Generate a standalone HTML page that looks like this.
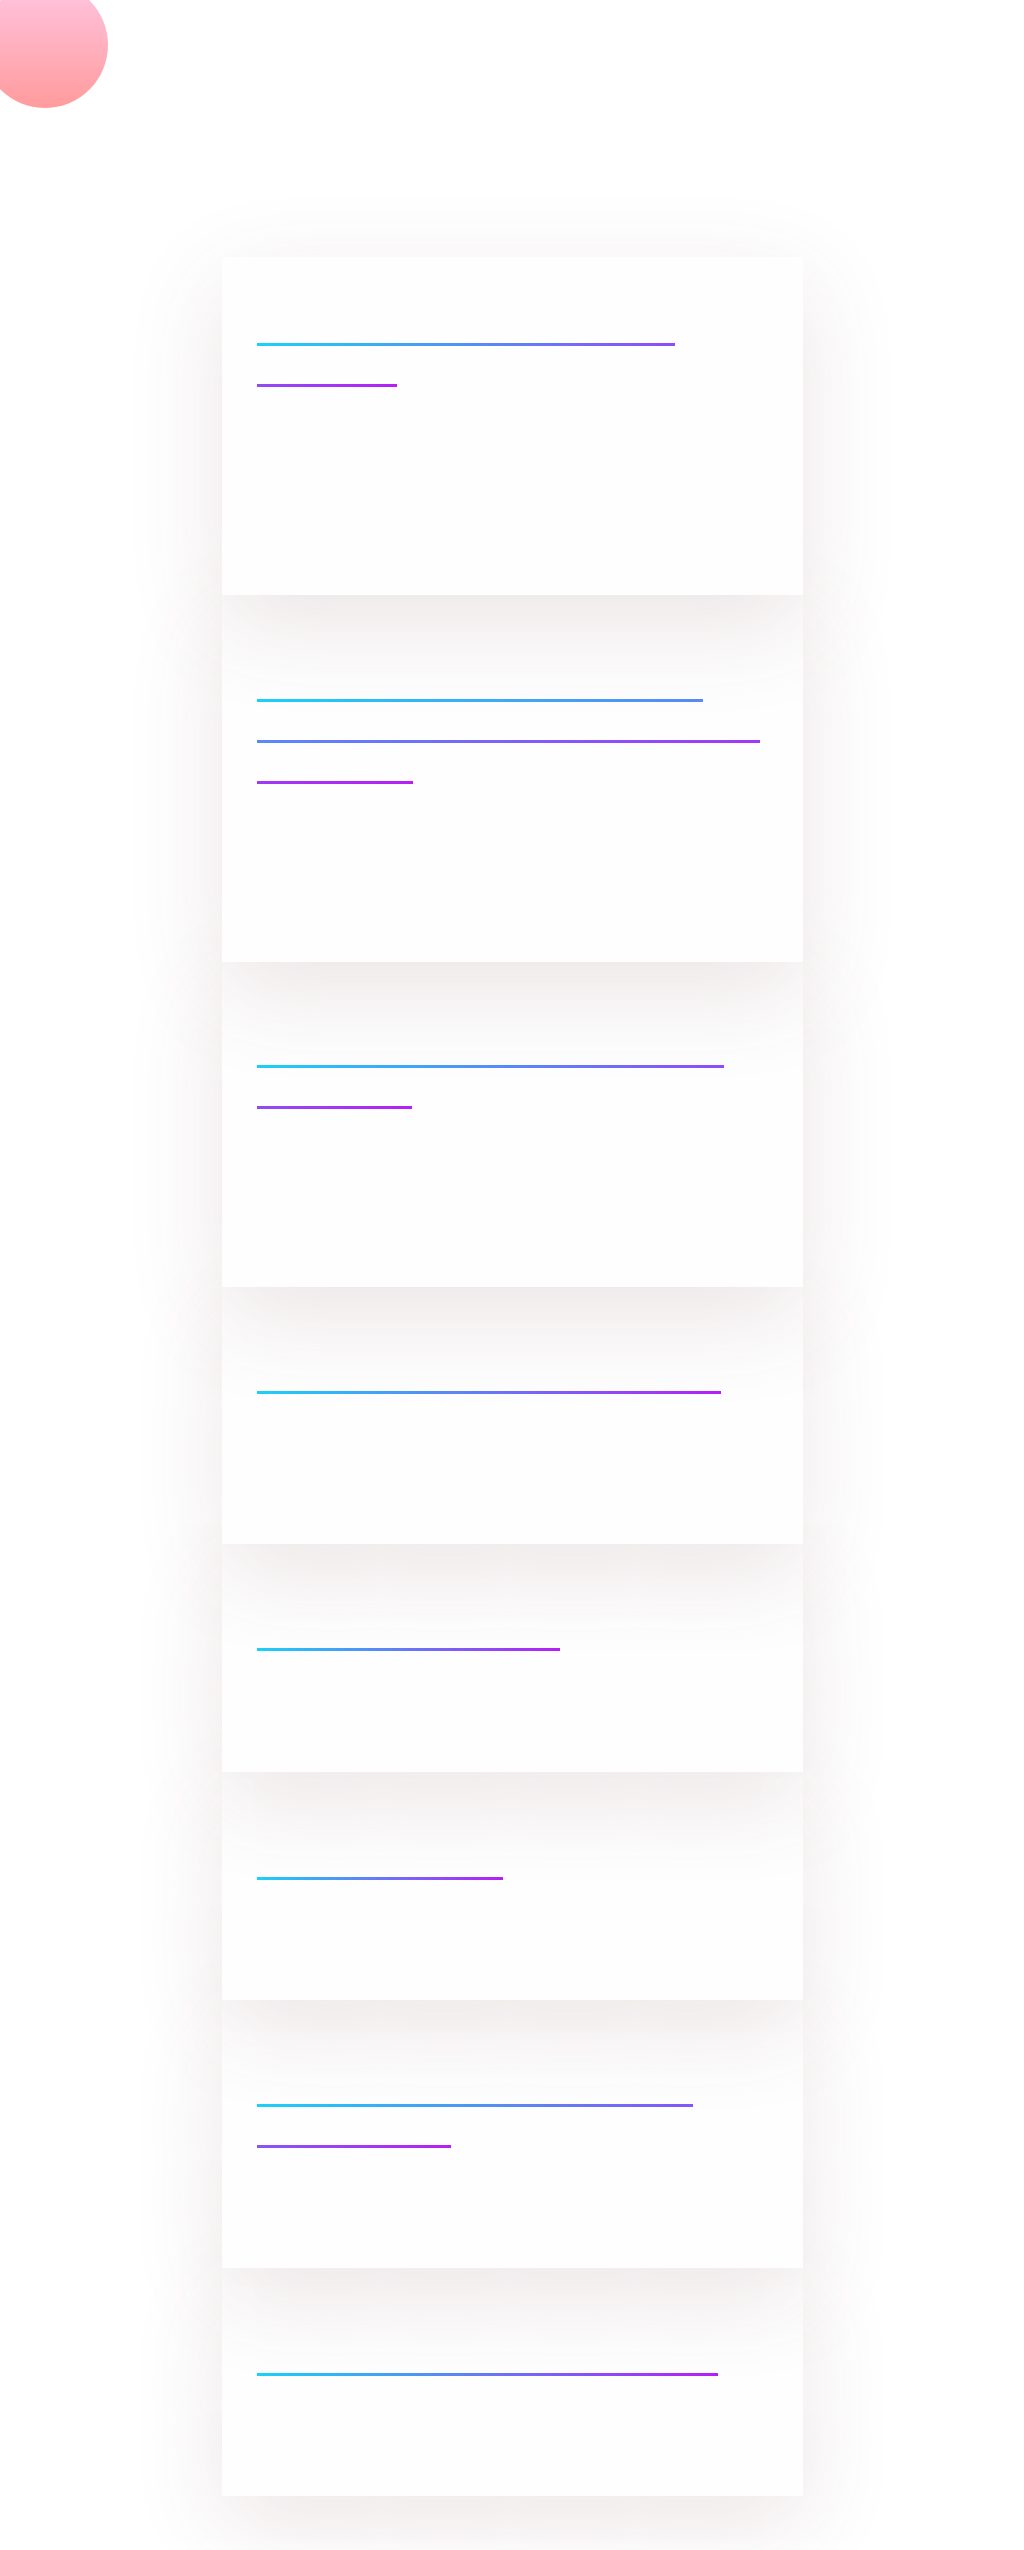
<!DOCTYPE html>
<html><head><style>
html,body{margin:0;padding:0;background:#fff;width:1024px;height:2550px;overflow:hidden;position:relative;font-family:"Liberation Sans",sans-serif}
.circle{position:absolute;left:-18px;top:-18px;width:126px;height:126px;border-radius:50%;background:linear-gradient(180deg,#ffc6e2,#ff9b9c)}
.card{position:absolute;left:222px;width:581px;background:#fefefe;box-shadow:0 28px 90px rgba(120,70,80,0.14)}
.l{position:absolute;left:35px;height:3px;background-image:linear-gradient(90deg,#1ad2f8,#b61ff8);background-repeat:no-repeat}
</style></head><body>
<div class="circle"></div>

<div class="card" style="top:257px;height:338px;z-index:8">
<div class="l" style="top:86px;width:418px;background-size:558px 3px;background-position:0 0"></div>
<div class="l" style="top:127px;width:140px;background-size:558px 3px;background-position:-418px 0"></div>
</div>

<div class="card" style="top:595px;height:367px;z-index:7">
<div class="l" style="top:104px;width:446px;background-size:1105px 3px;background-position:0 0"></div>
<div class="l" style="top:145px;width:503px;background-size:1105px 3px;background-position:-446px 0"></div>
<div class="l" style="top:186px;width:156px;background-size:1105px 3px;background-position:-949px 0"></div>
</div>

<div class="card" style="top:962px;height:325px;z-index:6">
<div class="l" style="top:103px;width:467px;background-size:622px 3px;background-position:0 0"></div>
<div class="l" style="top:144px;width:155px;background-size:622px 3px;background-position:-467px 0"></div>
</div>

<div class="card" style="top:1287px;height:257px;z-index:5">
<div class="l" style="top:104px;width:464px;background-size:464px 3px"></div>
</div>

<div class="card" style="top:1544px;height:228px;z-index:4">
<div class="l" style="top:104px;width:303px;background-size:303px 3px"></div>
</div>

<div class="card" style="top:1772px;height:228px;z-index:3">
<div class="l" style="top:105px;width:246px;background-size:246px 3px"></div>
</div>

<div class="card" style="top:2000px;height:268px;z-index:2">
<div class="l" style="top:104px;width:436px;background-size:630px 3px;background-position:0 0"></div>
<div class="l" style="top:145px;width:194px;background-size:630px 3px;background-position:-436px 0"></div>
</div>

<div class="card" style="top:2268px;height:228px;z-index:1">
<div class="l" style="top:105px;width:461px;background-size:461px 3px"></div>
</div>
</body></html>
